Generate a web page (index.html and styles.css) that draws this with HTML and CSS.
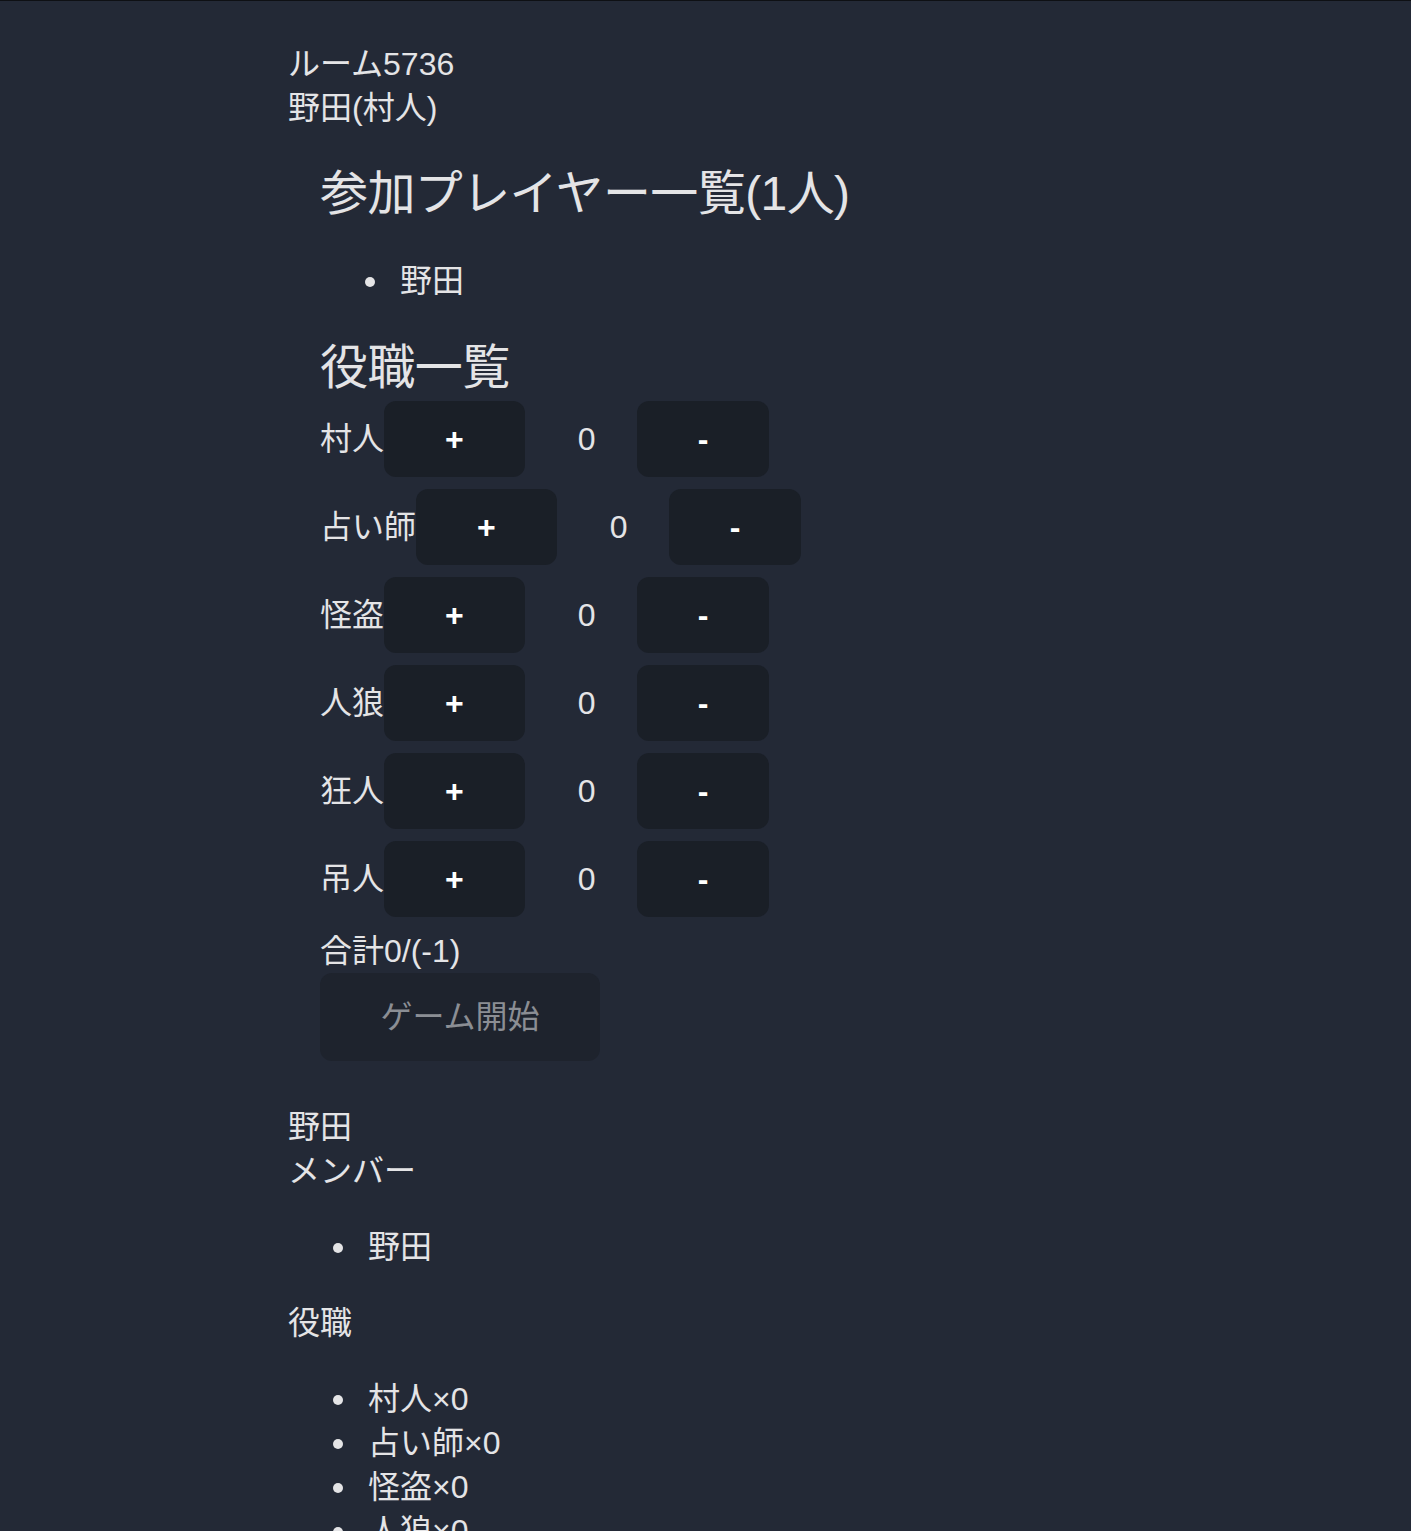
FILE: index.html
```html
<!DOCTYPE html>
<html lang="ja">
<head>
<meta charset="utf-8">
<title>ルーム5736</title>
<link rel="stylesheet" href="styles.css">
</head>
<body>
<main class="page">
  <div class="line">ルーム5736</div>
  <div class="line">野田(村人)</div>

  <section class="setup">
    <h2 class="heading">参加プレイヤー一覧(1人)</h2>
    <ul class="list">
      <li>野田</li>
    </ul>
    <h2 class="heading">役職一覧</h2>
    <div class="role-row">
      <span class="role-name">村人</span>
      <button class="btn">+</button>
      <span class="count">0</span>
      <button class="btn">-</button>
    </div>
    <div class="role-row">
      <span class="role-name">占い師</span>
      <button class="btn">+</button>
      <span class="count">0</span>
      <button class="btn">-</button>
    </div>
    <div class="role-row">
      <span class="role-name">怪盗</span>
      <button class="btn">+</button>
      <span class="count">0</span>
      <button class="btn">-</button>
    </div>
    <div class="role-row">
      <span class="role-name">人狼</span>
      <button class="btn">+</button>
      <span class="count">0</span>
      <button class="btn">-</button>
    </div>
    <div class="role-row">
      <span class="role-name">狂人</span>
      <button class="btn">+</button>
      <span class="count">0</span>
      <button class="btn">-</button>
    </div>
    <div class="role-row">
      <span class="role-name">吊人</span>
      <button class="btn">+</button>
      <span class="count">0</span>
      <button class="btn">-</button>
    </div>
    <div class="line">合計0/(-1)</div>
    <button class="btn btn-start" disabled>ゲーム開始</button>
  </section>

  <div class="line">野田</div>
  <div class="line">メンバー</div>
  <ul class="list">
    <li>野田</li>
  </ul>
  <div class="line">役職</div>
  <ul class="list">
    <li>村人×0</li>
    <li>占い師×0</li>
    <li>怪盗×0</li>
    <li>人狼×0</li>
    <li>狂人×0</li>
    <li>吊人×0</li>
  </ul>
</main>
</body>
</html>
```

FILE: styles.css
```css
html {
  background: #232936;
}

body {
  margin: 0;
  border-top: 1px solid #0e1014;
  background: #232936;
  color: #e4e4e6;
  font-family: "Liberation Sans", "Noto Sans CJK JP", sans-serif;
  font-size: 32px;
  line-height: 44px;
}

.page {
  padding: 41px 0 40px 288px;
}

.line {
  line-height: 44px;
}

.setup {
  margin: 31px 0 44px 32px;
}

.heading {
  margin: 0;
  font-size: 48px;
  line-height: 66px;
  font-weight: 400;
  letter-spacing: -0.6px;
}

.list {
  margin: 32px 0;
  padding-left: 80px;
  list-style: none;
}

.list li {
  line-height: 44px;
}

.list li::before {
  content: "";
  display: inline-block;
  width: 10px;
  height: 10px;
  border-radius: 50%;
  background: #e4e4e6;
  margin-left: -35px;
  margin-right: 25px;
  vertical-align: middle;
  position: relative;
  top: -2px;
}

.role-row {
  display: flex;
  align-items: center;
  height: 76px;
  margin-bottom: 12px;
}

.role-name {
  white-space: nowrap;
}

.btn {
  height: 76px;
  padding: 0 61px;
  border: none;
  border-radius: 12px;
  background: #1a1f27;
  color: #ffffff;
  font-family: "Liberation Sans", "Noto Sans CJK JP", sans-serif;
  font-size: 32px;
  font-weight: 700;
  line-height: 1;
}

.count {
  width: 112px;
  padding-left: 12px;
  box-sizing: border-box;
  text-align: center;
}

.btn-start {
  height: 88px;
  width: 280px;
  padding: 0;
  background: #1e232d;
  color: #8b8e94;
  font-weight: 400;
}
```
